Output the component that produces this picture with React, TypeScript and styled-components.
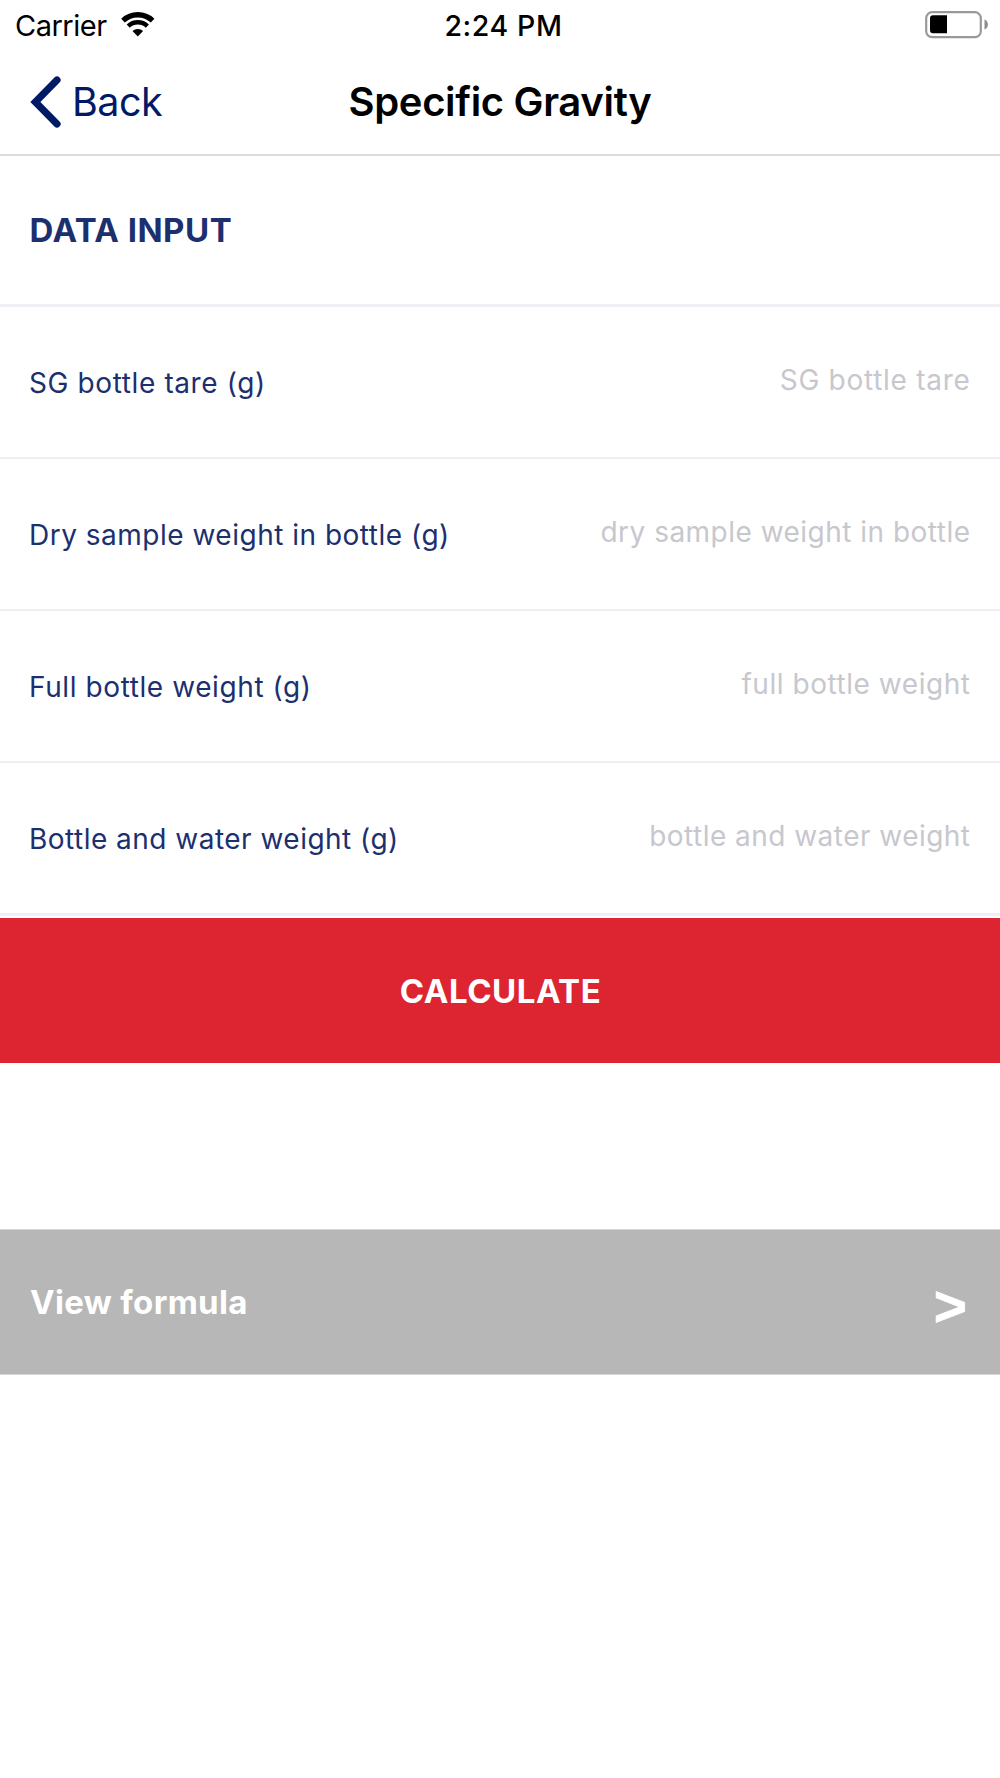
import React from "react";
import styled, { createGlobalStyle } from "styled-components";

const GlobalStyle = createGlobalStyle`
  *, *::before, *::after { box-sizing: border-box; }
  body {
    margin: 0;
    background: #fff;
    font-family: Inter, "Liberation Sans", sans-serif;
  }
`;

const navy = "#1c2f6e";

const Screen = styled.main`
  display: flex;
  flex-direction: column;
  min-height: 1778px;
  background: #fff;
`;

const StatusBar = styled.header`
  display: grid;
  grid-template-columns: 1fr auto 1fr;
  align-items: center;
  height: 50px;
  padding: 0 12px 0 15px;
  color: #000;
`;

const CarrierGroup = styled.div`
  display: flex;
  align-items: center;
  gap: 13px;
`;

const Carrier = styled.span`
  padding-top: 2px;
  font-size: 29px;
  line-height: 36px;
  letter-spacing: -0.5px;
`;

const Clock = styled.time`
  padding: 1px 0 0 4px;
  font-size: 28.5px;
  font-weight: 550;
  line-height: 36px;
  letter-spacing: 0.6px;
`;

const BatterySlot = styled.div`
  display: flex;
  justify-content: flex-end;
`;

const NavBar = styled.nav`
  display: grid;
  grid-template-columns: 1fr auto 1fr;
  align-items: center;
  height: 106px;
  padding: 0 30px;
  border-bottom: 2px solid #dcdcdd;
`;

const BackButton = styled.button`
  display: flex;
  align-items: center;
  justify-self: start;
  gap: 11px;
  padding: 0;
  border: 0;
  background: none;
  color: #001a66;
  font: 400 39.5px/48px Inter, "Liberation Sans", sans-serif;
  letter-spacing: -0.5px;
`;

const Title = styled.h1`
  margin: 0;
  color: #000;
  font-size: 40px;
  font-weight: 590;
  line-height: 48px;
  letter-spacing: -0.33px;
`;

const SectionHeader = styled.h2`
  display: flex;
  align-items: center;
  height: 151px;
  margin: 0;
  padding: 0 29.5px;
  border-bottom: 3px solid #f0f0f4;
  color: ${navy};
  font-size: 33px;
  font-weight: 700;
  letter-spacing: 0.5px;
`;

const Row = styled.div`
  display: flex;
  align-items: center;
  justify-content: space-between;
  height: 152px;
  padding: 0 29.5px 0 29px;
  border-bottom: 2px solid #eeeef3;

  &:last-of-type {
    height: 153px;
    border-bottom-width: 3px;
  }
`;

const Label = styled.span<{ $tracking: number }>`
  padding-top: 1px;
  color: ${navy};
  font-size: 28px;
  line-height: 36px;
  letter-spacing: ${(p) => p.$tracking}px;
`;

const Placeholder = styled(Label)`
  padding: 0 0 4px;
  color: #c7c7cd;
`;

const Fields = styled.section`
  margin-bottom: 2px;
`;

const CalculateButton = styled.button`
  height: 145px;
  margin-bottom: 166px;
  padding: 0 0 0 1px;
  border: 0;
  background: #dc2530;
  color: #fff;
  font: 700 33px/40px Inter, "Liberation Sans", sans-serif;
  letter-spacing: 0.5px;
`;

const FormulaLink = styled.button`
  display: flex;
  align-items: center;
  justify-content: space-between;
  height: 146px;
  padding: 0 33px 0 30px;
  border: solid #d6d6d6;
  border-width: 1px 0;
  background: #b7b7b7;
  color: #fff;
  font: 700 33px/40px Inter, "Liberation Sans", sans-serif;
  letter-spacing: 0.33px;
`;

const Arrow = styled.span`
  padding-top: 7px;
  font: 700 57px/64px "Liberation Sans", sans-serif;
  letter-spacing: 0;
  -webkit-text-stroke: 0.7px #fff;
`;

const fields = [
  { label: "SG bottle tare (g)", hint: "SG bottle tare", track: 0.61, hintTrack: 0.72 },
  { label: "Dry sample weight in bottle (g)", hint: "dry sample weight in bottle", track: 0.5, hintTrack: 0.48 },
  { label: "Full bottle weight (g)", hint: "full bottle weight", track: 0.59, hintTrack: 0.54 },
  { label: "Bottle and water weight (g)", hint: "bottle and water weight", track: 0.48, hintTrack: 0.47 },
];

const WifiIcon = () => (
  <svg width="36" height="26" viewBox="0 0 36 26" fill="none" stroke="#000">
    <path d="M3 8.6a21.65 21.65 0 0 1 29.6 0" strokeWidth="5.3" />
    <path d="M8.2 14.1a14.1 14.1 0 0 1 19.2 0" strokeWidth="4.5" />
    <path d="M17.8 24.6 12.5 19a7.7 7.7 0 0 1 10.6 0Z" fill="#000" stroke="none" />
  </svg>
);

const BatteryIcon = () => (
  <svg width="64" height="28" viewBox="0 0 64 28">
    <rect x="2.2" y="1.2" width="54.6" height="25" rx="6" fill="none" stroke="#999" strokeWidth="2.2" />
    <path d="M9 4.3h14v17.9H9a3 3 0 0 1-3-3V7.3a3 3 0 0 1 3-3Z" fill="#000" />
    <path d="M60.5 8.6a5.4 5.4 0 0 1 0 10Z" fill="#8c8c8c" />
  </svg>
);

const BackChevron = () => (
  <svg width="31" height="52" viewBox="0 0 31 52" fill="none">
    <path d="M27 4 5.4 26 27 48" stroke="#001a66" strokeWidth="7.2" strokeLinecap="round" />
  </svg>
);

export default function App() {
  return (
    <Screen>
      <GlobalStyle />
      <StatusBar>
        <CarrierGroup>
          <Carrier>Carrier</Carrier>
          <WifiIcon />
        </CarrierGroup>
        <Clock>2:24 PM</Clock>
        <BatterySlot>
          <BatteryIcon />
        </BatterySlot>
      </StatusBar>
      <NavBar>
        <BackButton>
          <BackChevron />
          Back
        </BackButton>
        <Title>Specific Gravity</Title>
      </NavBar>
      <SectionHeader>DATA INPUT</SectionHeader>
      <Fields>
        {fields.map((f) => (
          <Row key={f.label}>
            <Label $tracking={f.track}>{f.label}</Label>
            <Placeholder $tracking={f.hintTrack}>{f.hint}</Placeholder>
          </Row>
        ))}
      </Fields>
      <CalculateButton>CALCULATE</CalculateButton>
      <FormulaLink>
        View formula
        <Arrow>&gt;</Arrow>
      </FormulaLink>
    </Screen>
  );
}
